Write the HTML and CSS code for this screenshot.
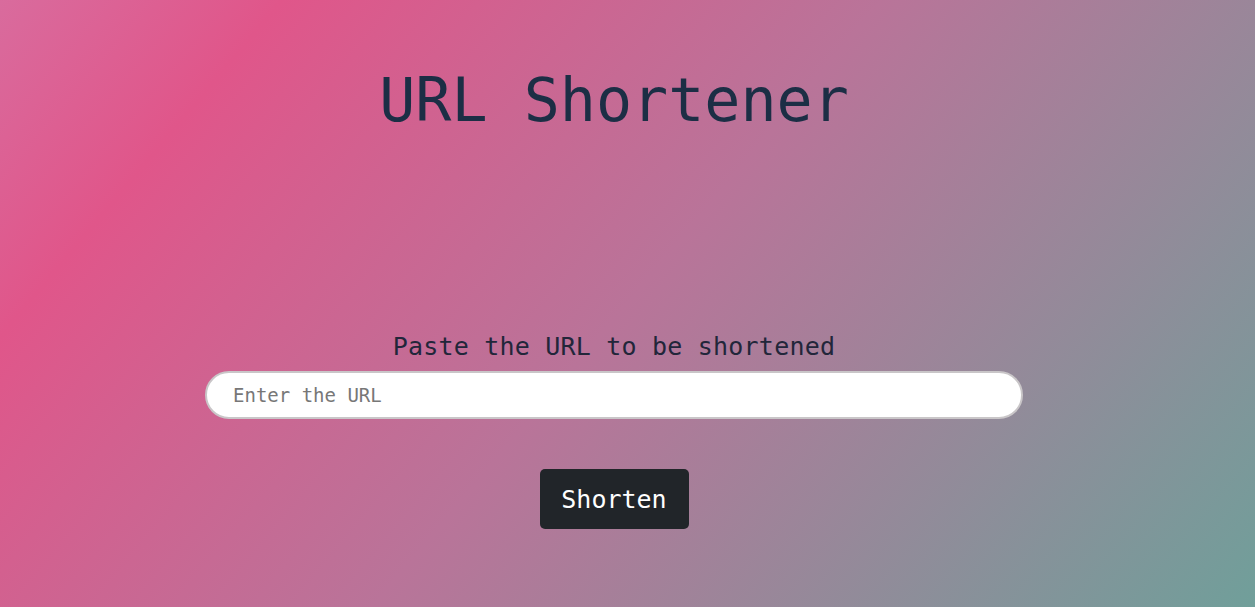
FILE: index.html
```html
<!DOCTYPE html>
<html lang="en">
<head>
<meta charset="utf-8">
<title>URL Shortener</title>
<link rel="stylesheet" href="styles.css">
</head>
<body>
<main class="page">
  <h1 class="title">URL Shortener</h1>
  <form class="form">
    <label class="label" for="url">Paste the URL to be shortened</label>
    <input class="url-input" id="url" type="text" placeholder="Enter the URL">
    <button class="btn" type="button">Shorten</button>
  </form>
</main>
</body>
</html>
```

FILE: styles.css
```css
html, body {
  margin: 0;
  padding: 0;
}

body {
  min-height: 100vh;
  background: linear-gradient(130deg, #d96b9d 0%, #e0568a 16%, #b97499 50%, #709f9a 100%);
  font-family: "DejaVu Sans Mono", "Liberation Mono", monospace;
}

.page {
  display: flex;
  flex-direction: column;
  align-items: center;
  padding-right: 27px;
  min-height: 100vh;
  box-sizing: border-box;
}

.title {
  margin: 70px 0 0;
  font-size: 60px;
  line-height: 1;
  font-weight: 400;
  color: #1c2e45;
}

.form {
  margin-top: 204px;
  display: flex;
  flex-direction: column;
  align-items: center;
}

.label {
  font-size: 25px;
  line-height: 1;
  color: #22263a;
  letter-spacing: 0.2px;
}

.url-input {
  margin-top: 12px;
  width: 818px;
  height: 48px;
  box-sizing: border-box;
  border: 2px solid #c9c6c8;
  border-radius: 24px;
  background: #fff;
  padding: 0 26px;
  font-family: inherit;
  font-size: 19px;
  color: #333;
  outline: none;
}

.url-input::placeholder {
  color: #777;
}

.btn {
  margin-top: 50px;
  width: 149px;
  height: 60px;
  border: none;
  border-radius: 5px;
  background: #212529;
  color: #fff;
  font-family: inherit;
  font-size: 25px;
  padding: 0;
}
```
